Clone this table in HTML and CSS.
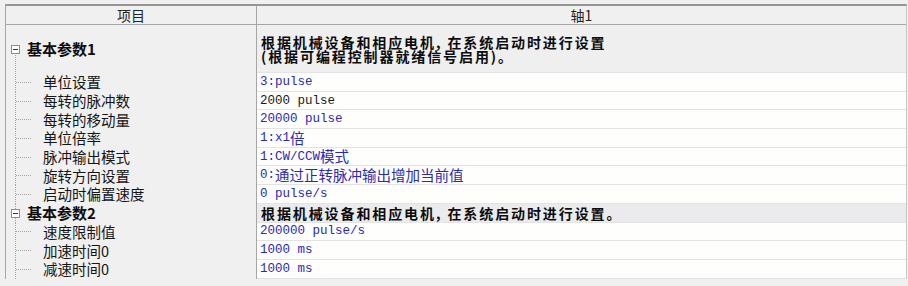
FILE: index.html
```html
<!DOCTYPE html>
<html lang="zh-CN">
<head>
<meta charset="utf-8">
<title>参数设置</title>
<link rel="stylesheet" href="styles.css">
</head>
<body>
<div class="sheet">
  <div class="row hdr">
    <div class="lc hc">项目</div>
    <div class="rc hc">轴1</div>
  </div>

  <div class="row grp g1">
    <div class="lc tree-top"><span class="box"></span><span class="gt">基本参数1</span></div>
    <div class="rc desc">根据机械设备和相应电机, 在系统启动时进行设置<br>(根据可编程控制器就绪信号启用)。</div>
  </div>
  <div class="row item">
    <div class="lc tree"><span class="twig"></span><span class="lbl">单位设置</span></div>
    <div class="rc val blue">3:pulse</div>
  </div>
  <div class="row item">
    <div class="lc tree"><span class="twig"></span><span class="lbl">每转的脉冲数</span></div>
    <div class="rc val black">2000 pulse</div>
  </div>
  <div class="row item">
    <div class="lc tree"><span class="twig"></span><span class="lbl">每转的移动量</span></div>
    <div class="rc val blue">20000 pulse</div>
  </div>
  <div class="row item">
    <div class="lc tree"><span class="twig"></span><span class="lbl">单位倍率</span></div>
    <div class="rc val blue">1:x1<span class="cj">倍</span></div>
  </div>
  <div class="row item">
    <div class="lc tree"><span class="twig"></span><span class="lbl">脉冲输出模式</span></div>
    <div class="rc val blue">1:CW/CCW<span class="cj">模式</span></div>
  </div>
  <div class="row item">
    <div class="lc tree"><span class="twig"></span><span class="lbl">旋转方向设置</span></div>
    <div class="rc val blue">0:<span class="cj">通过正转脉冲输出增加当前值</span></div>
  </div>
  <div class="row item">
    <div class="lc tree"><span class="twig"></span><span class="lbl">启动时偏置速度</span></div>
    <div class="rc val blue">0 pulse/s</div>
  </div>

  <div class="row grp g2">
    <div class="lc tree"><span class="box"></span><span class="gt">基本参数2</span></div>
    <div class="rc desc desc2">根据机械设备和相应电机, 在系统启动时进行设置。</div>
  </div>
  <div class="row item">
    <div class="lc tree"><span class="twig"></span><span class="lbl">速度限制值</span></div>
    <div class="rc val blue">200000 pulse/s</div>
  </div>
  <div class="row item">
    <div class="lc tree"><span class="twig"></span><span class="lbl">加速时间0</span></div>
    <div class="rc val blue">1000 ms</div>
  </div>
  <div class="row item">
    <div class="lc tree"><span class="twig"></span><span class="lbl">减速时间0</span></div>
    <div class="rc val blue">1000 ms</div>
  </div>
</div>
</body>
</html>
```

FILE: styles.css
```css
html, body {
  margin: 0;
  padding: 0;
  background: #f0f0f0;
}
body {
  font-family: "Noto Sans CJK SC", "Noto Sans", sans-serif;
  color: #111;
}
.sheet {
  margin: 4px 0 0 5px;
  width: 902px;
  border-top: 2px solid #969696;
  border-left: 1px solid #a6a6a6;
  border-right: 1px solid #c8c8c8;
  box-sizing: border-box;
}
.row {
  display: grid;
  grid-template-columns: 251px 1fr;
}
.lc {
  border-right: 1px solid #a6a6a6;
  box-sizing: border-box;
  display: flex;
  align-items: center;
  min-width: 0;
}
.rc {
  display: flex;
  align-items: center;
  min-width: 0;
  box-sizing: border-box;
}
.hdr {
  height: 19px;
  border-bottom: 1px solid #a6a6a6;
  box-sizing: border-box;
  background: #f0f0f0;
}
.hc {
  justify-content: center;
  font-size: 14px;
  line-height: 18px;
  color: #222;
}
.g1 {
  height: 48px;
}
.g2, .item {
  height: 18.7px;
}
.desc {
  background: #efefef;
  padding-left: 4px;
  font-weight: 700;
  font-size: 14px;
  line-height: 14px;
  letter-spacing: 1.9px;
  color: #0c0c0c;
  border-bottom: 1px solid #e4e4e4;
}
.desc2 {
  background: #ebebee;
}
.val {
  background: #fefefc;
  border-bottom: 1px solid #e3e3e3;
  padding-left: 3px;
  font-family: "Liberation Mono", "Noto Sans CJK SC", monospace;
  font-size: 12.5px;
  white-space: pre;
}
.blue { color: #2a2ab4; }
.black { color: #1a1a1a; }
.cj {
  font-family: "Noto Sans CJK SC", sans-serif;
  font-size: 14.5px;
  line-height: 1;
}
.tree {
  background-image: repeating-linear-gradient(to bottom, #a4a4a4 0 1px, transparent 1px 2px);
  background-size: 1px 100%;
  background-position: 9px 0;
  background-repeat: no-repeat;
}
.tree-top {
  background-image: repeating-linear-gradient(to bottom, #a4a4a4 0 1px, transparent 1px 2px);
  background-size: 1px 50%;
  background-position: 9px 100%;
  background-repeat: no-repeat;
}
.box {
  width: 9px;
  height: 9px;
  margin-left: 5px;
  margin-right: 7px;
  border: 1px solid #8e8e8e;
  box-sizing: border-box;
  background: #fff linear-gradient(#333, #333) no-repeat center / 5px 1px;
  flex: none;
}
.gt {
  font-weight: 700;
  font-size: 15px;
  color: #0c0c0c;
  line-height: 16px;
}
.twig {
  width: 16px;
  height: 1px;
  margin-left: 10px;
  margin-right: 11px;
  background: repeating-linear-gradient(to right, #a4a4a4 0 1px, transparent 1px 2px);
  flex: none;
}
.lbl {
  font-size: 14.5px;
  line-height: 16px;
  color: #151515;
  white-space: nowrap;
}
```
